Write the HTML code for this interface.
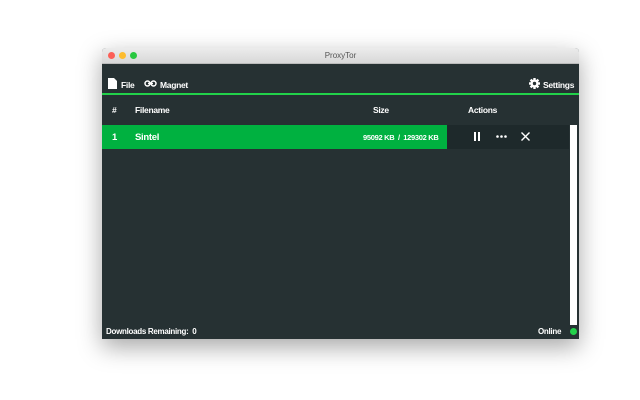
<html><head><style>
body{margin:0;width:640px;height:400px;background:#fff;font-family:"Liberation Sans",sans-serif;position:relative;overflow:hidden}
.win{position:absolute;left:102px;top:48px;width:477px;height:291px;box-shadow:0 8px 24px rgba(0,0,0,.35);border-radius:4px 4px 0 0;overflow:hidden;background:#263133}
.tb{height:15px;background:linear-gradient(#ececec,#d8d8d8);border-bottom:1px solid #bbb;text-align:center;font-size:8px;color:#555;line-height:15px;position:relative}
.d{position:absolute;top:4px;width:7px;height:7px;border-radius:50%}
.t{position:absolute;color:#fff;font-size:8.5px;font-weight:bold;letter-spacing:-0.3px}
</style></head><body>
<div class="win">
<div class="tb">ProxyTor
<div class="d" style="left:6px;background:#fc5f57"></div><div class="d" style="left:17px;background:#fdbc2e"></div><div class="d" style="left:28px;background:#28c840"></div></div>
<div style="position:absolute;left:0;top:45px;width:477px;height:2px;background:#22d14a"></div>
<svg style="position:absolute;left:6px;top:30px" width="9" height="11"><path d="M0 0H6L9 3V11H0Z" fill="#fff"/></svg>
<div class="t" style="left:19px;top:32px">File</div>
<svg style="position:absolute;left:42px;top:32px" width="13" height="7"><rect x="1" y="1" width="5" height="5" rx="2.5" fill="none" stroke="#fff" stroke-width="1.5"/><rect x="7" y="1" width="5" height="5" rx="2.5" fill="none" stroke="#fff" stroke-width="1.5"/><line x1="4" y1="3.5" x2="9" y2="3.5" stroke="#fff" stroke-width="1.5"/></svg>
<div class="t" style="left:58px;top:32px">Magnet</div>
<svg style="position:absolute;left:427px;top:30px" width="11" height="11" viewBox="0 0 11 11"><g fill="#fff"><circle cx="5.5" cy="5.5" r="4"/><rect x="4.3" y="0" width="2.4" height="11"/><rect x="0" y="4.3" width="11" height="2.4"/><rect x="4.3" y="0" width="2.4" height="11" transform="rotate(45 5.5 5.5)"/><rect x="4.3" y="0" width="2.4" height="11" transform="rotate(-45 5.5 5.5)"/></g><circle cx="5.5" cy="5.5" r="1.7" fill="#263133"/></svg>
<div class="t" style="left:441px;top:32px">Settings</div>
<div class="t" style="left:10px;top:57px">#</div>
<div class="t" style="left:33px;top:57px">Filename</div>
<div class="t" style="left:271px;top:57px">Size</div>
<div class="t" style="left:366px;top:57px">Actions</div>
<div style="position:absolute;left:0;top:77px;width:345px;height:24px;background:#00b140"></div>
<div style="position:absolute;left:345px;top:77px;width:122px;height:24px;background:#1e292b"></div>
<div style="position:absolute;left:468px;top:77px;width:7px;height:200px;background:#fff"></div>
<div class="t" style="left:10px;top:84px;font-size:9.5px">1</div>
<div class="t" style="left:33px;top:84px;font-size:9.5px">Sintel</div>
<div class="t" style="left:261px;top:85px;font-size:7.5px">95092 KB &nbsp;/ &nbsp;129302 KB</div>
<div style="position:absolute;left:372px;top:84px;width:2px;height:9px;background:#fff;box-shadow:4px 0 #fff"></div>
<svg style="position:absolute;left:394px;top:87px" width="11" height="3"><circle cx="1.5" cy="1.5" r="1.3" fill="#fff"/><circle cx="5.5" cy="1.5" r="1.3" fill="#fff"/><circle cx="9.5" cy="1.5" r="1.3" fill="#fff"/></svg>
<svg style="position:absolute;left:419px;top:84px" width="9" height="9"><path d="M0.5 0.5L8.5 8.5M8.5 0.5L0.5 8.5" stroke="#fff" stroke-width="1.4"/></svg>
<div class="t" style="left:4px;top:279px;font-size:8px">Downloads Remaining: &nbsp;0</div>
<div class="t" style="left:436px;top:279px;font-size:8px">Online</div>
<div style="position:absolute;left:468px;top:280px;width:7px;height:7px;border-radius:50%;background:#22d14a"></div>
</div>
</body></html>
